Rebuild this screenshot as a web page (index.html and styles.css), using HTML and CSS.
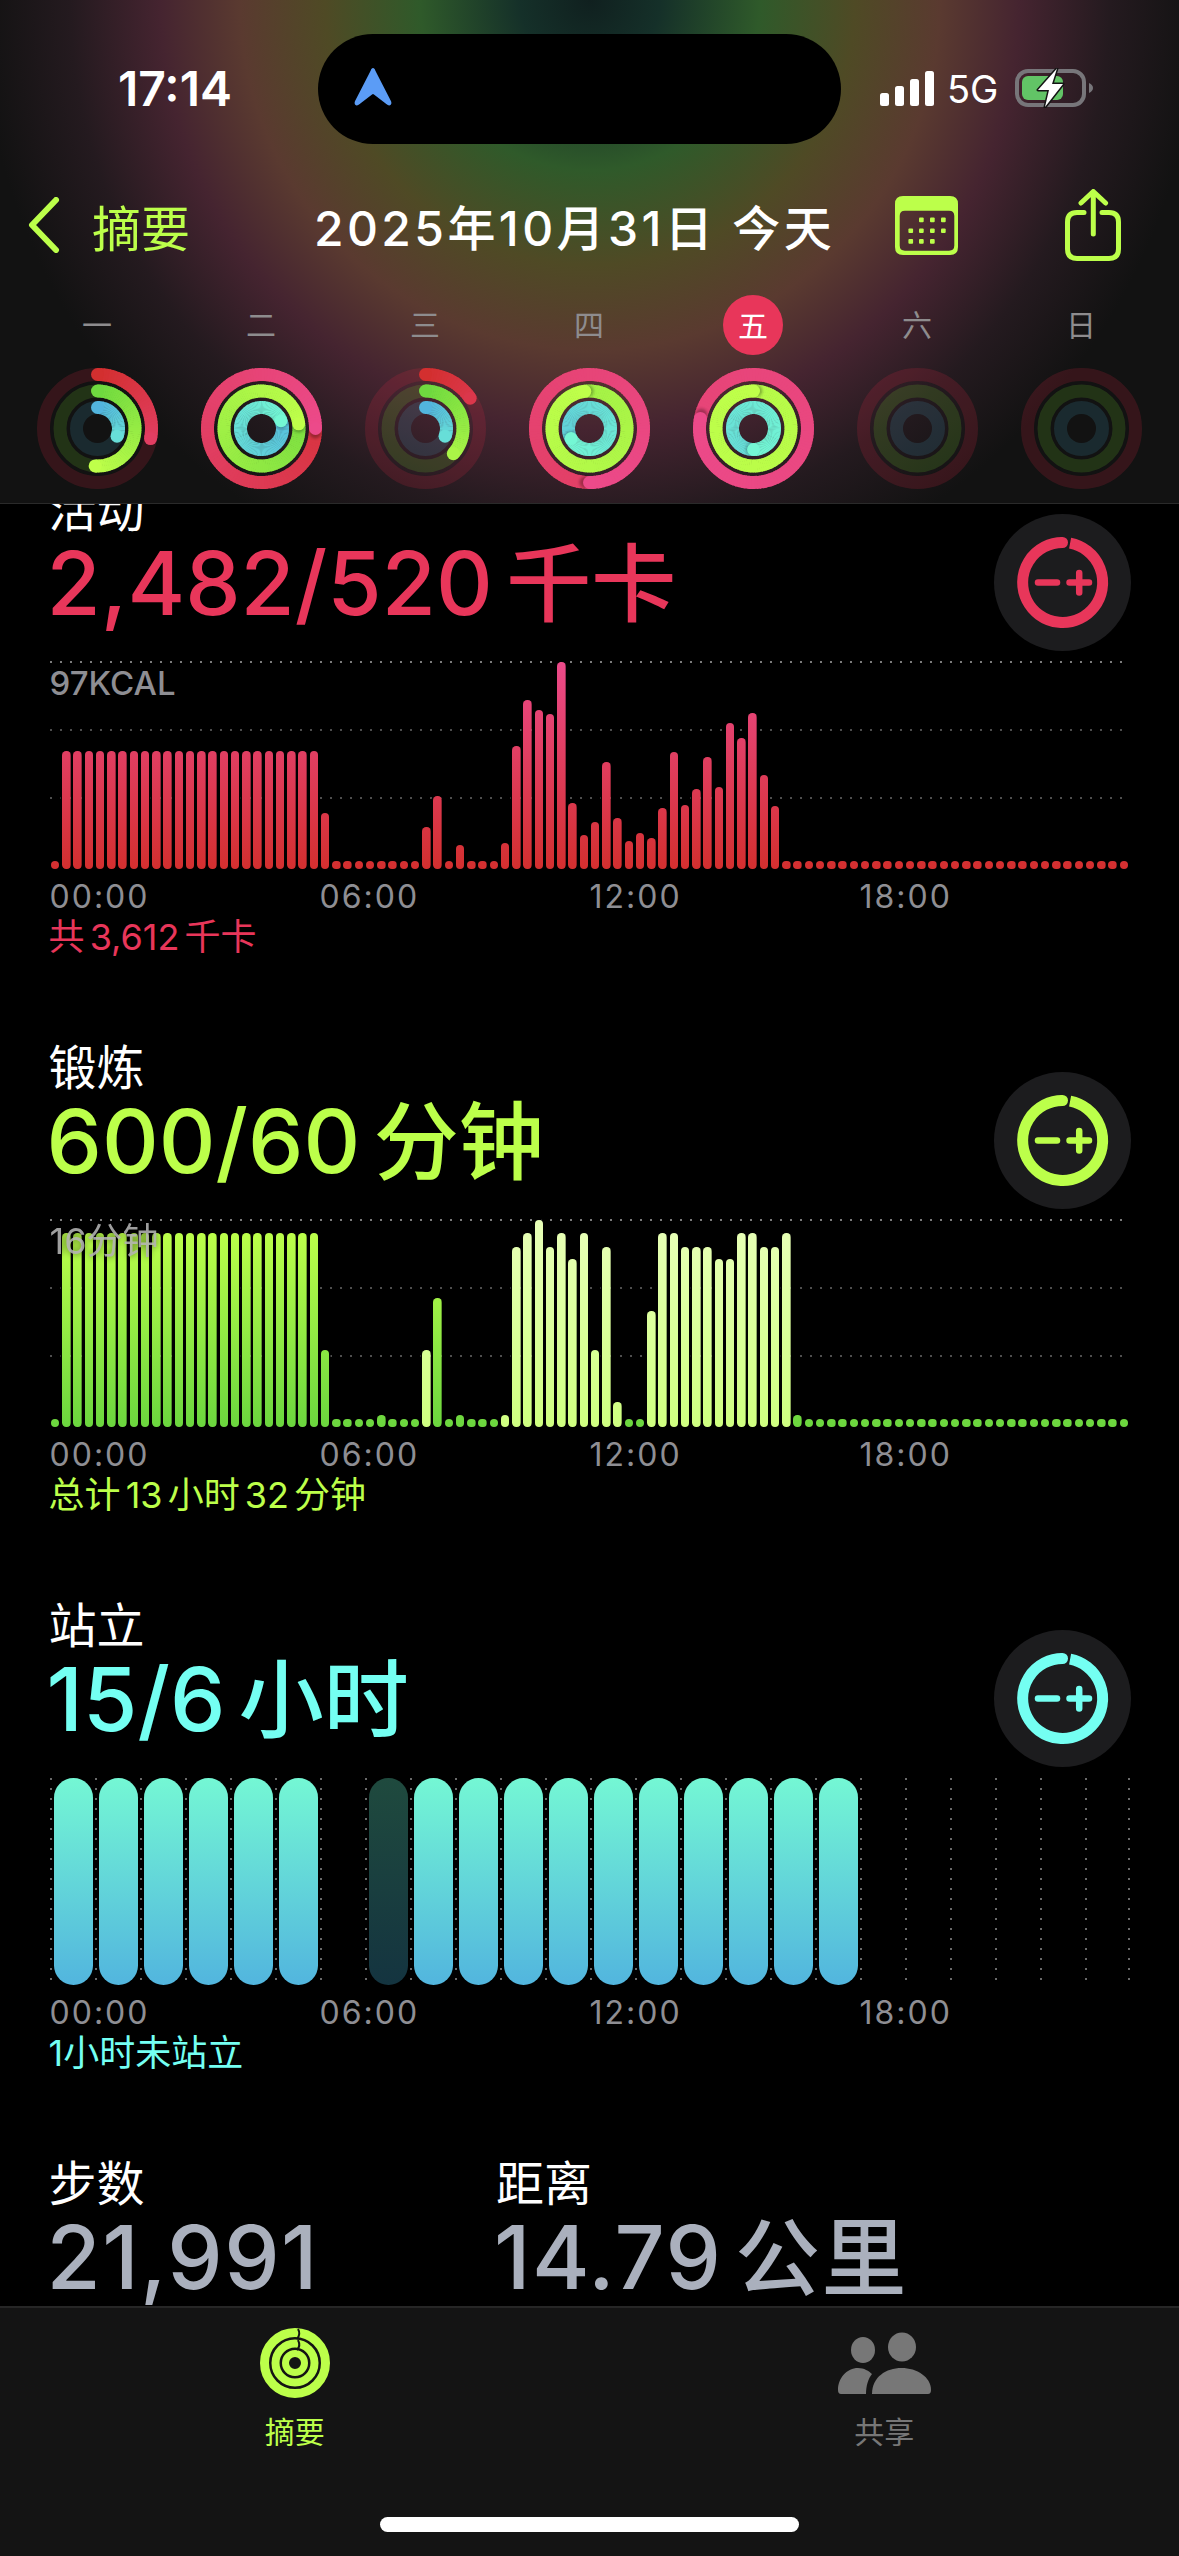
FILE: index.html

```html
<!DOCTYPE html>
<html lang="zh-CN">
<head>
    <meta charset="UTF-8">
    <meta name="viewport" content="width=device-width, initial-scale=1.0">
    <title>活动摘要</title>
    <link rel="stylesheet" href="styles.css">
</head>
<body>
<svg class="defs" width="0" height="0">
    <symbol id="goal-btn" viewBox="0 0 137 137">
        <path d="M76.1 29.2 A40 40 0 1 1 68.5 28.5" fill="none" stroke="currentColor" stroke-width="11"/>
        <circle cx="68.5" cy="28.5" r="5.5" fill="currentColor"/>
        <path d="M44 68.5 H63" fill="none" stroke="currentColor" stroke-width="6.5" stroke-linecap="round"/>
        <path d="M75.5 68.5 H95 M85.2 59 V78.5" fill="none" stroke="currentColor" stroke-width="6.5" stroke-linecap="round"/>
    </symbol>
</svg>

<div class="page">
    <header class="top">
        <div class="status">
            <div class="status-time">17:14</div>
            <div class="island">
                <svg class="loc-arrow" viewBox="0 0 40 41">
                    <path d="M20 1 C21 1 22 2 22.5 4 L39 36 C40.5 40 37 42 34 39 L21 29 Q20 28 19 29 L6 39 C3 42 -.5 40 1 36 L17.5 4 C18 2 19 1 20 1Z" fill="#5b9cf6"/>
                </svg>
            </div>
            <div class="status-right">
                <div class="signal">
                    <span class="sig-1"></span><span class="sig-2"></span><span class="sig-3"></span><span class="sig-4"></span>
                </div>
                <span class="net">5G</span>
                <svg class="battery" viewBox="0 0 80 40" width="80" height="40">
                    <rect x="2" y="3" width="67" height="34" rx="11" fill="none" stroke="#77767a" stroke-width="4"/>
                    <rect x="7" y="8" width="41" height="24" rx="6" fill="#62c466"/>
                    <path d="M74 15 Q78 17 78 20 Q78 23 74 25Z" fill="#77767a"/>
                    <path d="M42 .5 L23 22 L34 22 L30 39 L48 16 L37 16 Z" fill="#fff" stroke="#141414" stroke-width="3" paint-order="stroke" stroke-linejoin="round"/>
                </svg>
            </div>
        </div>

        <nav class="nav">
            <svg class="back-icon" viewBox="0 0 32 56" width="32" height="56">
                <path d="M28 3 L4 28 L28 53" fill="none" stroke="#bcff4a" stroke-width="6" stroke-linecap="round" stroke-linejoin="round"/>
            </svg>
            <span class="back-label">摘要</span>
            <span class="nav-title">2025年10月31日 今天</span>
            <svg class="cal-icon" viewBox="0 0 63 59" width="63" height="59">
                <path fill-rule="evenodd" fill="#bcff4a" d="M8 0 H55 Q63 0 63 8 V51 Q63 59 55 59 H8 Q0 59 0 51 V8 Q0 0 8 0Z M10 14.7 Q4.7 14.7 4.7 20 V49.5 Q4.7 54.7 10 54.7 H54 Q59.3 54.7 59.3 49.5 V20 Q59.3 14.7 54 14.7Z"/>
                <g fill="#bcff4a">
                    <rect x="24" y="21.6" width="4.7" height="4.7" rx="1"/><rect x="35" y="21.6" width="4.7" height="4.7" rx="1"/><rect x="46" y="21.6" width="4.7" height="4.7" rx="1"/>
                    <rect x="13.4" y="32.4" width="4.7" height="4.7" rx="1"/><rect x="24" y="32.4" width="4.7" height="4.7" rx="1"/><rect x="35" y="32.4" width="4.7" height="4.7" rx="1"/><rect x="46" y="32.4" width="4.7" height="4.7" rx="1"/>
                    <rect x="13.4" y="43" width="4.7" height="4.7" rx="1"/><rect x="24" y="43" width="4.7" height="4.7" rx="1"/><rect x="35" y="43" width="4.7" height="4.7" rx="1"/>
                </g>
            </svg>
            <svg class="share-icon" viewBox="0 0 56 72" width="56" height="72">
                <path d="M19 23.5 H12 Q2.5 23.5 2.5 33 V60 Q2.5 69.5 12 69.5 H44 Q53.5 69.5 53.5 60 V33 Q53.5 23.5 44 23.5 H37" fill="none" stroke="#bcff4a" stroke-width="5" stroke-linecap="round"/>
                <path d="M28.3 45 V4 M16 14 L28.3 2.5 L40.6 14" fill="none" stroke="#bcff4a" stroke-width="5" stroke-linecap="round" stroke-linejoin="round"/>
            </svg>
        </nav>

        <div class="week">
            <span>一</span>
            <span>二</span>
            <span>三</span>
            <span>四</span>
            <span class="today">五</span>
            <span>六</span>
            <span>日</span>
        </div>
        <div class="week-rings" id="week-rings"></div>
    </header>

    <main class="scroll">
        <section class="metric">
            <div class="metric-head">
                <div>
                    <div class="metric-title">活动</div>
                    <div class="metric-value move">2,482/520 <span class="unit">千卡</span></div>
                </div>
                <svg class="goal-btn move"><use href="#goal-btn"/></svg>
            </div>
            <div class="chart">
                <div class="chart-max">97KCAL</div>
                <div class="bars" id="move-bars"></div>
            </div>
            <div class="times"><span>00:00</span><span>06:00</span><span>12:00</span><span>18:00</span></div>
            <div class="metric-sub move">共 3,612 千卡</div>
        </section>

        <section class="metric">
            <div class="metric-head">
                <div>
                    <div class="metric-title">锻炼</div>
                    <div class="metric-value exercise">600/60 <span class="unit">分钟</span></div>
                </div>
                <svg class="goal-btn exercise"><use href="#goal-btn"/></svg>
            </div>
            <div class="chart">
                <div class="chart-max over-bars">16分钟</div>
                <div class="bars" id="exercise-bars"></div>
            </div>
            <div class="times"><span>00:00</span><span>06:00</span><span>12:00</span><span>18:00</span></div>
            <div class="metric-sub exercise">总计 13 小时 32 分钟</div>
        </section>

        <section class="metric">
            <div class="metric-head">
                <div>
                    <div class="metric-title">站立</div>
                    <div class="metric-value stand">15/6 <span class="unit">小时</span></div>
                </div>
                <svg class="goal-btn stand"><use href="#goal-btn"/></svg>
            </div>
            <div class="stand-chart" id="stand-bars"></div>
            <div class="times"><span>00:00</span><span>06:00</span><span>12:00</span><span>18:00</span></div>
            <div class="metric-sub stand">1小时未站立</div>
        </section>

        <section class="totals">
            <div class="total-col">
                <div class="metric-title">步数</div>
                <div class="metric-value total">21,991</div>
            </div>
            <div>
                <div class="metric-title">距离</div>
                <div class="metric-value total">14.79 <span class="unit">公里</span></div>
            </div>
        </section>
    </main>

    <footer class="tabbar">
        <div class="tabs">
            <div class="tab active">
                <svg viewBox="0 0 70 70" width="70" height="70">
                    <circle cx="35" cy="35" r="30.5" fill="none" stroke="#bcff4a" stroke-width="9"/>
                    <circle cx="35" cy="35" r="19.5" fill="none" stroke="#bcff4a" stroke-width="8"/>
                    <circle cx="35" cy="35" r="9.5" fill="none" stroke="#bcff4a" stroke-width="7"/>
                    <path d="M38 1 Q41 6 37 11 M38 12 Q41 18 37 22" fill="none" stroke="#141414" stroke-width="2"/>
                </svg>
                <span>摘要</span>
            </div>
            <div class="tab">
                <svg viewBox="0 0 93 62" width="93" height="62">
                    <ellipse cx="25" cy="18" rx="12" ry="13"/>
                    <ellipse cx="64" cy="15" rx="14" ry="14.5"/>
                    <path d="M34 62 C34 45 48 36 63.5 36 C79 36 93 45 93 58 Q93 62 90 62Z"/>
                    <path d="M0 58 C0 46 9 36 20 36 C26 36 31 39 34 42 C30 47 28 54 28 62 L3 62 Q0 62 0 58Z"/>
                </svg>
                <span>共享</span>
            </div>
        </div>
        <div class="home-bar"></div>
    </footer>
</div>

<script src="script.js"></script>
</body>
</html>
```

FILE: styles.css

```css
* {
    box-sizing: border-box;
}

body {
    margin: 0;
    background-color: #000;
    color: #fff;
    font-family: Inter, "Noto Sans CJK SC", sans-serif;
}

.defs {
    display: block;
    height: 0;
}

.page {
    width: 1179px;
    height: 2556px;
    display: flex;
    flex-direction: column;
    overflow: hidden;
}

/* header */
.top {
    flex: none;
    height: 504px;
    border-bottom: 1px solid #2a2a2a;
    background: radial-gradient(circle 620px at 590px 0,
        #10201f 0, #153029 70px, #2f5a2a 170px, #4f4a25 265px, #5a3a30 350px,
        #452430 430px, #241a1f 520px, #121212 610px);
}

.status {
    display: flex;
    height: 144px;
    padding-top: 34px;
}

.status-time {
    width: 318px;
    padding: 30px 0 0 118px;
    font-size: 48px;
    line-height: 50px;
    font-weight: 600;
}

.island {
    width: 523px;
    height: 110px;
    border-radius: 55px;
    background-color: #000;
    display: flex;
    align-items: center;
    padding-left: 36px;
}

.loc-arrow {
    width: 38px;
    height: 41px;
    margin-top: -6px;
}

.status-right {
    display: flex;
    align-items: flex-end;
    height: 72px;
    margin-left: 39px;
}

.signal {
    display: flex;
    align-items: flex-end;
    gap: 6px;
    width: 54px;
}

.signal span {
    width: 9px;
    background-color: #fff;
    border-radius: 2.5px;
}

.sig-1 { height: 13px; }
.sig-2 { height: 20px; }
.sig-3 { height: 27px; }
.sig-4 { height: 35px; }

.net {
    margin-left: 13px;
    width: 54px;
    font-size: 38px;
    line-height: 40px;
    font-weight: 400;
    margin-bottom: -3px;
}

.battery {
    margin-left: 14px;
    margin-bottom: -2px;
}

.nav {
    display: flex;
    align-items: center;
    height: 72px;
    margin-top: 45px;
    padding-left: 28px;
}

.back-label {
    margin-left: 32px;
    width: 222px;
    font-size: 49px;
    color: #bcff4a;
}

.nav-title {
    width: 581px;
    font-size: 48px;
    font-weight: 500;
    letter-spacing: 3.4px;
}

.share-icon {
    margin-left: 107px;
}

.week {
    display: grid;
    grid-template-columns: repeat(7, 164px);
    margin: 34px 0 0 15px;
    height: 60px;
    justify-items: center;
    align-items: center;
    font-size: 30px;
    color: #8e8c8e;
}

.week span {
    padding-bottom: 4px;
}

.week .today {
    width: 60px;
    height: 60px;
    padding-bottom: 2px;
    border-radius: 50%;
    background-color: #e8365a;
    color: #fff;
    display: flex;
    align-items: center;
    justify-content: center;
}

.week-rings {
    display: grid;
    grid-template-columns: repeat(7, 164px);
    margin: 13px 0 0 15px;
    justify-items: center;
}

.week-rings svg {
    display: block;
}

/* scrolled content, the first title is cut by the header */
.scroll {
    flex: 1;
    min-height: 0;
    overflow: hidden;
}

.metric {
    height: 558px;
    padding: 0 49.5px;
}

.metric:first-child {
    margin-top: -22px;
}

.metric-head {
    display: flex;
    justify-content: space-between;
    align-items: flex-start;
}

.metric-title {
    height: 57px;
    margin-left: -1px;
    font-size: 48px;
    line-height: 56px;
}

.metric-value {
    height: 88px;
    margin-left: -3px;
    font-size: 88px;
    line-height: 88px;
    font-weight: 500;
    word-spacing: -10px;
    white-space: nowrap;
}

.metric-value .unit {
    font-size: 85px;
}

.move { color: #e8365a; }
.exercise { color: #bcff4a; }
.stand { color: #74fff2; }

.total {
    color: #aab0bd;
    letter-spacing: 1.4px;
    word-spacing: -12px;
}

.goal-btn {
    flex: none;
    width: 137px;
    height: 137px;
    margin: 32px -1.5px 0 0;
    border-radius: 50%;
    background-color: #1c1c1e;
}

.chart {
    position: relative;
    height: 208px;
    margin-top: 10px;
    background-image:
        linear-gradient(90deg, #7c7c7c 2px, transparent 2px),
        linear-gradient(90deg, #4e4e4e 2px, transparent 2px),
        linear-gradient(90deg, #4e4e4e 2px, transparent 2px);
    background-size: 10px 2px;
    background-position: 0 0, 0 68px, 0 136px;
    background-repeat: repeat-x;
}

.chart-max {
    position: absolute;
    left: 0;
    top: 3px;
    font-size: 33px;
    line-height: 38px;
    font-weight: 500;
    color: #8e8e93;
    z-index: 1;
}

.chart-max.over-bars {
    font-size: 36px;
    color: #b0b0b0;
    font-weight: 400;
    opacity: .9;
    text-shadow: 0 0 7px rgba(0, 0, 0, .7);
}

.bars {
    display: flex;
    height: 100%;
}

.bar-cell {
    flex: 1;
    display: flex;
    align-items: flex-end;
    justify-content: center;
}

.bar {
    width: 8.3px;
    border-radius: 4.2px;
    box-shadow: 0 0 0 1.5px #000;
    background-repeat: no-repeat;
    background-position: bottom;
}

.bar-move {
    background-image: linear-gradient(to top, #d32f2f, #ec4a8a);
    background-size: 100% 207px;
}

.bar-exercise {
    background-image: linear-gradient(to top, #6bd63e, #bcff4a);
    background-size: 100% 194px;
}

.bar-over {
    background-image: linear-gradient(to top, #cfff80, #e8ffb8);
    background-size: 100% 207px;
}

.stand-chart {
    display: grid;
    grid-template-columns: repeat(24, 45px);
    height: 207px;
    margin-top: 11px;
}

.stand-col {
    padding: 0 1.5px 0 4.5px;
    background-image: linear-gradient(#6a6a6a 2px, transparent 2px);
    background-size: 2px 10px;
    background-repeat: repeat-y;
}

.stand-col:last-child {
    background-image:
        linear-gradient(#6a6a6a 2px, transparent 2px),
        linear-gradient(#6a6a6a 2px, transparent 2px);
    background-position: 0 0, 43px 0;
}

.stand-bar {
    height: 100%;
    border-radius: 20px;
    background-image: linear-gradient(to bottom, #74f7d4, #52b5de);
}

.stand-bar.dim {
    background-image: linear-gradient(to bottom, #1f4a3e, #143440);
}

.times {
    display: grid;
    grid-template-columns: repeat(4, 270px);
    margin-top: 10px;
    height: 36px;
    font-size: 32px;
    line-height: 36px;
    letter-spacing: 2px;
    color: #8e8e93;
}

.metric-sub {
    height: 44px;
    margin-left: -1px;
    font-size: 36px;
    line-height: 44px;
    word-spacing: -5px;
    white-space: nowrap;
}

.totals {
    display: flex;
    padding: 0 49.5px;
}

.total-col {
    width: 447.5px;
}

/* tab bar */
.tabbar {
    flex: none;
    height: 250px;
    border-top: 2px solid #262626;
    background-color: #141414;
    display: flex;
    flex-direction: column;
    align-items: center;
}

.tabs {
    display: grid;
    grid-template-columns: 1fr 1fr;
    width: 100%;
    height: 209px;
    padding-top: 20px;
}

.tab {
    display: flex;
    flex-direction: column;
    align-items: center;
    color: #777;
    fill: #777;
}

.tab svg {
    height: 70px;
    margin-bottom: 16px;
}

.tab span {
    font-size: 30px;
    line-height: 36px;
}

.tab.active {
    color: #bcff4a;
}

.home-bar {
    width: 419px;
    height: 15px;
    border-radius: 8px;
    background-color: #fff;
}
```

FILE: script.js

```js
// heights in px, 96 quarter hours. 0 = just the dot
var DOT = 8;

function filled(from, to, h, arr) {
    for (var i = from; i <= to; i++) arr[i] = h;
}

var moveData = new Array(96).fill(DOT);
filled(1, 23, 118, moveData);
var moveRest = {
    24: 56, 33: 42, 34: 73, 36: 24, 40: 26, 41: 123, 42: 169, 43: 159, 44: 155, 45: 207,
    46: 66, 47: 34, 48: 47, 49: 107, 50: 51, 51: 28, 52: 36, 53: 31, 54: 61, 55: 117,
    56: 64, 57: 80, 58: 112, 59: 82, 60: 146, 61: 131, 62: 156, 63: 94, 64: 63
};
Object.keys(moveRest).forEach(function(k) { moveData[k] = moveRest[k]; });

var exData = new Array(96).fill(DOT);
filled(1, 23, 194, exData);
var exRest = {
    24: 77, 29: 12, 33: 77, 34: 129, 36: 12, 40: 12, 41: 180, 42: 194, 43: 207, 44: 180,
    45: 194, 46: 168, 47: 194, 48: 77, 49: 180, 50: 25, 53: 116, 54: 194, 55: 194, 56: 180,
    57: 180, 58: 180, 59: 168, 60: 168, 61: 194, 62: 194, 63: 180, 64: 180, 65: 194, 66: 12
};
Object.keys(exRest).forEach(function(k) { exData[k] = exRest[k]; });

// these quarters are over the exercise goal, drawn paler
var exOver = [33, 40, 41, 42, 43, 44, 45, 46, 47, 48, 49, 50, 53, 54, 55, 56, 57, 58, 59, 60, 61, 62, 63, 64, 65];

function buildBars(id, data, cls, overList) {
    var box = document.getElementById(id);
    data.forEach(function(h, i) {
        var cell = document.createElement("div");
        cell.className = "bar-cell";
        var bar = document.createElement("div");
        var isOver = overList && overList.indexOf(i) !== -1;
        bar.className = "bar " + (isOver ? "bar-over" : cls);
        bar.style.height = h + "px";
        cell.appendChild(bar);
        box.appendChild(cell);
    });
}

buildBars("move-bars", moveData, "bar-move");
buildBars("exercise-bars", exData, "bar-exercise", exOver);

// stand hours: 1 full, 2 dim, 0 empty
var standData = [1, 1, 1, 1, 1, 1, 0, 2, 1, 1, 1, 1, 1, 1, 1, 1, 1, 1, 0, 0, 0, 0, 0, 0];
var standBox = document.getElementById("stand-bars");
standData.forEach(function(v) {
    var col = document.createElement("div");
    col.className = "stand-col";
    if (v > 0) {
        var bar = document.createElement("div");
        bar.className = v === 2 ? "stand-bar dim" : "stand-bar";
        col.appendChild(bar);
    }
    standBox.appendChild(col);
});

// week rings
var RINGS = [
    { key: "move", r: 54, c1: [211, 47, 47], c2: [236, 74, 138], track: "rgba(230,40,70,.17)" },
    { key: "ex", r: 37.5, c1: [111, 217, 63], c2: [191, 255, 74], track: "rgba(120,220,50,.17)" },
    { key: "stand", r: 21, c1: [82, 181, 222], c2: [116, 247, 212], track: "rgba(80,190,230,.14)" }
];

var days = [
    { move: .28, ex: .51, stand: .31 },
    { move: 1.25, ex: 1.23, stand: 1.19 },
    { move: .155, ex: .367, stand: .31 },
    { move: 2.5, ex: 2.98, stand: 1.67 },
    { move: 4.78, ex: 10, stand: 2.5 },
    { move: 0, ex: 0, stand: 0 },
    { move: 0, ex: 0, stand: 0 }
];

function point(r, turn) {
    var a = turn * 2 * Math.PI;
    return [60.5 + r * Math.sin(a), 60.5 - r * Math.cos(a)];
}

function mix(a, b, t) {
    return "rgb(" + a.map(function(v, i) { return Math.round(v + (b[i] - v) * t); }).join(",") + ")";
}

function ringSvg(day) {
    var out = '<svg width="121" height="121" viewBox="0 0 121 121">' +
        '<defs><filter id="sh" x="-50%" y="-50%" width="200%" height="200%"><feGaussianBlur stdDeviation="1.5"/></filter></defs>';
    RINGS.forEach(function(ring) {
        var frac = day[ring.key];
        out += '<circle cx="60.5" cy="60.5" r="' + ring.r + '" fill="none" stroke-width="13" stroke="' + ring.track + '"/>';
        if (!frac) return;
        var start = Math.max(0, frac - 1);
        var steps = Math.ceil((frac - start) * 120);
        var colorAt = function(travel) {
            return mix(ring.c1, ring.c2, Math.min(1, travel / Math.max(frac, .5)));
        };
        for (var i = 0; i < steps; i++) {
            var t1 = start + (frac - start) * i / steps;
            var t2 = start + (frac - start) * Math.min(steps, i + 1.3) / steps;
            var p1 = point(ring.r, t1), p2 = point(ring.r, t2);
            out += '<path d="M' + p1[0] + ' ' + p1[1] + ' A' + ring.r + ' ' + ring.r + ' 0 0 1 ' + p2[0] + ' ' + p2[1] +
                '" fill="none" stroke-width="13" stroke="' + colorAt(t1) + '"/>';
        }
        var s = point(ring.r, start), e = point(ring.r, frac);
        if (frac <= 1) {
            out += '<circle cx="' + s[0] + '" cy="' + s[1] + '" r="6.5" fill="' + colorAt(0) + '"/>';
        } else {
            // small shade where the end of the ring lies on its own start
            var back = point(ring.r, frac + .012);
            out += '<circle cx="' + back[0] + '" cy="' + back[1] + '" r="6" fill="rgba(0,0,0,.3)" filter="url(#sh)"/>';
        }
        out += '<circle cx="' + e[0] + '" cy="' + e[1] + '" r="6.5" fill="' + colorAt(frac) + '"/>';
    });
    return out + "</svg>";
}

document.getElementById("week-rings").innerHTML = days.map(ringSvg).join("");
```
